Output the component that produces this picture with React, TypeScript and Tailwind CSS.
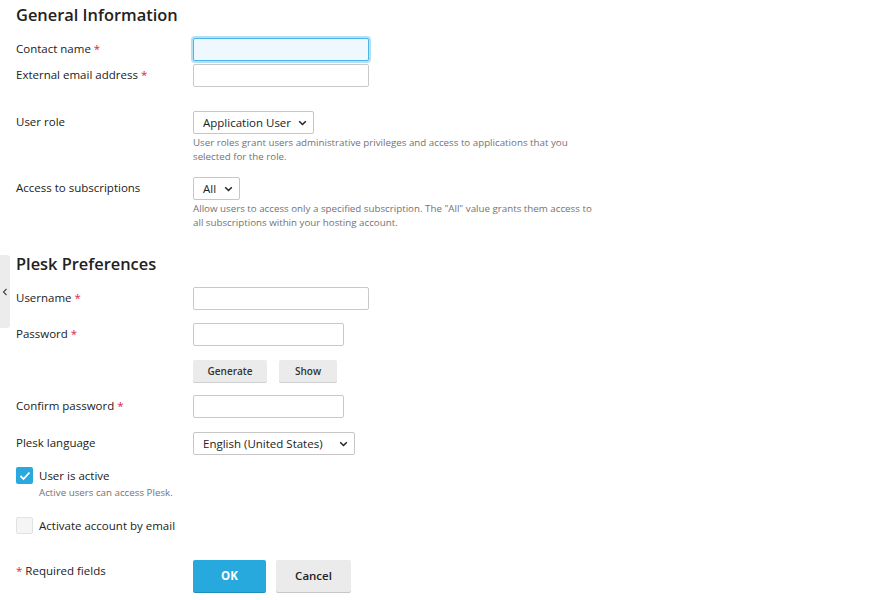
import React from "react";

const Req = () => <span className="text-[#d6264d] ml-[3px]">*</span>;

const Chevron = () => (
  <svg width="9" height="6" viewBox="0 0 9 6" className="ml-auto shrink-0">
    <path d="M1.2 1.2 L4.5 4.5 L7.8 1.2" fill="none" stroke="#222" strokeWidth="1.5" />
  </svg>
);

function Select({ text, w }: { text: string; w: string }) {
  return (
    <div className={`${w} h-[23px] border border-[#c6c6c6] rounded-[2px] bg-white flex items-center pl-[9px] pr-[6px] text-[11.5px] text-[#222] whitespace-nowrap`}>
      <span>{text}</span>
      <Chevron />
    </div>
  );
}

function Input({ w, focus }: { w: string; focus?: boolean }) {
  return focus ? (
    <div className={`${w} h-[23px] border border-[#4db6e6] rounded-[2px] bg-[#eef8fe] shadow-[0_0_0_2px_#b3e0f6]`} />
  ) : (
    <div className={`${w} h-[23px] border border-[#c9c9c9] rounded-[2px] bg-white`} />
  );
}

function Row({ label, children, className = "" }: { label: React.ReactNode; children: React.ReactNode; className?: string }) {
  return (
    <div className={`flex ${className}`}>
      <div className="w-[177px] shrink-0 text-[11.5px] text-[#222] leading-[22px]">{label}</div>
      <div>{children}</div>
    </div>
  );
}

function Help({ children }: { children: React.ReactNode }) {
  return <div className="text-[9.75px] leading-[14px] text-[#737373] mt-[2px] w-[410px]">{children}</div>;
}

export default function App() {
  return (
    <div className="relative w-[882px] h-[600px] bg-white overflow-hidden" style={{ fontFamily: '"Open Sans", sans-serif' }}>
      <div className="absolute left-0 top-[255px] w-[10px] h-[73px] bg-[#ececec] rounded-r-[3px] flex items-center justify-center">
        <svg width="6" height="8" viewBox="0 0 6 8">
          <path d="M4.5 1 L1.5 4 L4.5 7" fill="none" stroke="#444" strokeWidth="1.1" />
        </svg>
      </div>
      <div className="pl-[16px]">
        <h2 className="text-[16.4px] font-semibold text-[#222] leading-[24px] pt-[3px]">General Information</h2>
        <Row label={<>Contact name<Req /></>} className="mt-[11px]">
          <Input w="w-[176px]" focus />
        </Row>
        <Row label={<>External email address<Req /></>} className="mt-[3px]">
          <Input w="w-[176px]" />
        </Row>
        <Row label="User role" className="mt-[24px]">
          <Select text="Application User" w="w-[121px]" />
          <Help>User roles grant users administrative privileges and access to applications that you selected for the role.</Help>
        </Row>
        <Row label="Access to subscriptions" className="mt-[13px]">
          <Select text="All" w="w-[47px]" />
          <Help>Allow users to access only a specified subscription. The "All" value grants them access to all subscriptions within your hosting account.</Help>
        </Row>
        <h2 className="text-[16.4px] font-semibold text-[#222] leading-[24px] mt-[22px]">Plesk Preferences</h2>
        <Row label={<>Username<Req /></>} className="mt-[11px]">
          <Input w="w-[176px]" />
        </Row>
        <Row label={<>Password<Req /></>} className="mt-[13px]">
          <Input w="w-[151px]" />
          <div className="flex gap-[12px] mt-[14px]">
            <button className="w-[74px] h-[22px] bg-[#ebebeb] shadow-[0_1px_0_#cfcfcf] rounded-[2px] text-[10px] font-semibold text-[#333]">Generate</button>
            <button className="w-[58px] h-[22px] bg-[#ebebeb] shadow-[0_1px_0_#cfcfcf] rounded-[2px] text-[10px] font-semibold text-[#333]">Show</button>
          </div>
        </Row>
        <Row label={<>Confirm password<Req /></>} className="mt-[13px]">
          <Input w="w-[151px]" />
        </Row>
        <Row label="Plesk language" className="mt-[14px]">
          <Select text="English (United States)" w="w-[162px]" />
        </Row>
        <div className="mt-[12px] flex items-start">
          <div className="w-[17px] h-[17px] bg-[#29a9e0] rounded-[2px] flex items-center justify-center">
            <svg width="12" height="10" viewBox="0 0 12 10">
              <path d="M1.5 5 L4.5 8 L10.5 1.5" fill="none" stroke="white" strokeWidth="1.8" />
            </svg>
          </div>
          <div className="ml-[6px]">
            <div className="text-[11.5px] text-[#222] leading-[17px]">User is active</div>
            <div className="text-[9.75px] text-[#737373] leading-[14px] mt-[2px]">Active users can access Plesk.</div>
          </div>
        </div>
        <div className="mt-[17px] flex items-center">
          <div className="w-[17px] h-[17px] bg-[#f5f5f5] border border-[#e2e2e2] rounded-[2px]" />
          <div className="ml-[6px] text-[11.5px] text-[#222] leading-[17px]">Activate account by email</div>
        </div>
        <div className="mt-[26px] flex">
          <div className="w-[177px] text-[11.5px] text-[#222] leading-[22px]">
            <span className="text-[#d6264d] mr-[3px]">*</span>Required fields
          </div>
          <button className="w-[73px] h-[32px] bg-[#28a9de] shadow-[0_1px_0_#1d8fbd] rounded-[2px] text-[11.5px] font-bold text-white">OK</button>
          <button className="ml-[10px] w-[75px] h-[32px] bg-[#ebebeb] shadow-[0_1px_0_#c6c6c6] rounded-[2px] text-[11.5px] font-semibold text-[#222]">Cancel</button>
        </div>
      </div>
    </div>
  );
}
